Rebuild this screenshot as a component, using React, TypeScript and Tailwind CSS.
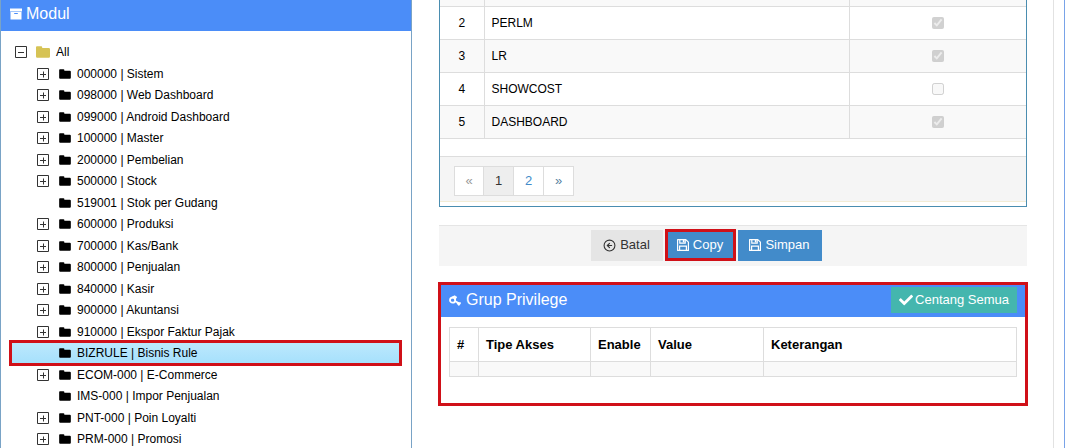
import { CircleArrowLeft } from "lucide-react";
import { FaCheck } from "react-icons/fa";

type Module = { name: string; expandable: boolean; selected?: boolean };

const modules: Module[] = [
  { name: "000000 | Sistem", expandable: true },
  { name: "098000 | Web Dashboard", expandable: true },
  { name: "099000 | Android Dashboard", expandable: true },
  { name: "100000 | Master", expandable: true },
  { name: "200000 | Pembelian", expandable: true },
  { name: "500000 | Stock", expandable: true },
  { name: "519001 | Stok per Gudang", expandable: false },
  { name: "600000 | Produksi", expandable: true },
  { name: "700000 | Kas/Bank", expandable: true },
  { name: "800000 | Penjualan", expandable: true },
  { name: "840000 | Kasir", expandable: true },
  { name: "900000 | Akuntansi", expandable: true },
  { name: "910000 | Ekspor Faktur Pajak", expandable: true },
  { name: "BIZRULE | Bisnis Rule", expandable: false, selected: true },
  { name: "ECOM-000 | E-Commerce", expandable: true },
  { name: "IMS-000 | Impor Penjualan", expandable: false },
  { name: "PNT-000 | Poin Loyalti", expandable: true },
  { name: "PRM-000 | Promosi", expandable: true },
];

const groups = [
  { no: 2, name: "PERLM", checked: true },
  { no: 3, name: "LR", checked: true },
  { no: 4, name: "SHOWCOST", checked: false },
  { no: 5, name: "DASHBOARD", checked: true },
];

function ArchiveIcon() {
  return (
    <svg viewBox="0 0 12 12" className="h-3 w-3 shrink-0" aria-hidden="true">
      <path d="M0 .5h12v3H0z" fill="#fff" />
      <path d="M.5 4h11v7.6H.5zM4.2 5v1h3.6V5z" fill="#fff" fillRule="evenodd" />
    </svg>
  );
}

function FolderIcon({ className }: { className: string }) {
  return (
    <svg viewBox="0 0 14 12" className={className} fill="currentColor" aria-hidden="true">
      <path d="M0 1.2Q0 .2 1 .2h4.2q1 0 1 1v.9h6.6q1.2 0 1.2 1.2v7.3q0 1.2-1.2 1.2H1.2Q0 11.8 0 10.6z" />
    </svg>
  );
}

function KeyIcon() {
  return (
    <svg viewBox="0 0 12 12" className="h-3 w-3 shrink-0" fill="none" stroke="#fff" aria-hidden="true">
      <ellipse cx="3.6" cy="6.2" rx="2.6" ry="2.5" strokeWidth="1.8" />
      <path d="M2.8 3.6 6.4 2M5.6 5.4 7.4 2.6M5.8 7 10 9.2" strokeWidth="1.8" />
      <path d="M7.8 8.2h4v1.6L9.9 12 7.8 9.8z" fill="#fff" stroke="none" />
    </svg>
  );
}

function SaveIcon() {
  return (
    <svg viewBox="0 0 12 12" className="h-3 w-3 shrink-0" fill="none" stroke="#fff" strokeWidth="1.2" aria-hidden="true">
      <path d="M.6.6h8.2l2.6 2.6v8.2H.6z" strokeLinejoin="round" />
      <path d="M2.8.6v3.6h5.4V.6M2.6 11.4V7.2h6.8v4.2" />
      <path d="M5.8 1h1.6v2.4H5.8z" fill="#fff" stroke="none" />
    </svg>
  );
}

function Toggle({ open }: { open?: boolean }) {
  return (
    <button type="button" aria-label={open ? "Collapse" : "Expand"} className="h-3 w-3 shrink-0">
      <svg viewBox="0 0 12 12" className="h-3 w-3" fill="none" stroke="#333" strokeWidth="1">
        <path d="M.5.5h11v11H.5zM3 6.5h6" />
        {!open && <path d="M6.5 3.5v6" />}
      </svg>
    </button>
  );
}

function ModulePanel() {
  return (
    <section className="border-x border-[#79a3c6] bg-white">
      <h2 className="flex h-[31px] items-center gap-1 bg-[#4b8df8] pb-1 pl-[9px] text-base text-white">
        <ArchiveIcon />
        Modul
      </h2>
      <div className="pt-[10px] pr-[11px] pl-[10px] text-xs text-black">
        <div className="flex h-[22px] items-center pl-1">
          <Toggle open />
          <FolderIcon className="ml-[9px] h-3 w-[14px] text-[#d6c355]" />
          <span className="ml-[6px]">All</span>
        </div>
        <ul>
          {modules.map((m) => (
            <li
              key={m.name}
              className={
                m.selected
                  ? "flex h-[22px] items-center bg-linear-to-b from-[#bde9fd] to-[#a5e0fc] pl-[26px] outline-3 -outline-offset-1 outline-[#d01018]"
                  : "flex items-center pl-[26px] odd:h-[21px] even:h-[22px]"
              }
            >
              {m.expandable ? <Toggle /> : <span className="w-3" />}
              <FolderIcon className="ml-[10px] h-[10px] w-3 text-black" />
              <span className="ml-[6px] whitespace-nowrap">{m.name}</span>
            </li>
          ))}
        </ul>
      </div>
    </section>
  );
}

function GroupTable() {
  return (
    <section className="border-x border-b border-[#4a8db0] bg-white pb-1">
      <table className="w-full table-fixed border-collapse text-xs text-black">
        <colgroup>
          <col className="w-[44px]" />
          <col />
          <col className="w-[177px]" />
        </colgroup>
        <tbody>
          <tr className="h-[6px] border-b border-[#ddd] bg-[#f9f9f9]">
            <td className="border-r border-[#ddd]" />
            <td className="border-r border-[#ddd]" />
            <td />
          </tr>
          {groups.map((g) => (
            <tr key={g.no} className="h-[33px] border-b border-[#ddd] even:bg-white odd:bg-[#f9f9f9]">
              <td className="border-r border-[#ddd] text-center">{g.no}</td>
              <td className="border-r border-[#ddd] px-[7px]">{g.name}</td>
              <td className="text-center">
                <input
                  type="checkbox"
                  disabled
                  defaultChecked={g.checked}
                  aria-label={g.name}
                  className="mx-auto block h-3 w-3"
                />
              </td>
            </tr>
          ))}
        </tbody>
      </table>
      <div className="mt-[17px] border-t border-b border-t-[#ddd] border-b-[#f3ecd6] bg-[#f5f5f5] px-[14px] pt-[9px] pb-[5px]">
        <nav aria-label="Pagination" className="flex text-[13px]">
          <a href="#prev" className="flex h-[30px] w-[30px] items-center justify-center border border-[#ddd] bg-white text-[#999]">«</a>
          <a href="#1" className="-ml-px flex h-[30px] w-[31px] items-center justify-center border border-[#ddd] bg-[#eee] text-[#333]">1</a>
          <a href="#2" className="-ml-px flex h-[30px] w-[31px] items-center justify-center border border-[#ddd] bg-white text-[#428bca]">2</a>
          <a href="#next" className="-ml-px flex h-[30px] w-[31px] items-center justify-center border border-[#ddd] bg-white text-[#5580a0]">»</a>
        </nav>
      </div>
    </section>
  );
}

function Actions() {
  return (
    <div className="mt-[18px] flex h-[41px] items-center justify-center gap-[2px] border-t border-[#e5e5e5] bg-[#f5f5f5] pr-[54px] pb-px text-[13px]">
      <button type="button" className="flex h-[31px] w-[72px] items-center justify-center gap-1 bg-[#e5e5e5] text-[#333]">
        <CircleArrowLeft className="h-[13px] w-[13px]" />
        Batal
      </button>
      <button type="button" className="flex h-8 w-[71px] items-center justify-center gap-1 border-3 border-[#d01018] bg-[#428bca] text-white">
        <SaveIcon />
        Copy
      </button>
      <button type="button" className="flex h-[31px] w-[84px] items-center justify-center gap-1 bg-[#428bca] text-white">
        <SaveIcon />
        Simpan
      </button>
    </div>
  );
}

function PrivilegePanel() {
  return (
    <section className="-mx-px mt-4 border-3 border-[#d01018] bg-white pb-[26px]">
      <header className="flex h-8 items-center justify-between bg-[#4b8df8] pr-2 pl-2 text-white">
        <h2 className="flex items-center gap-[5px] pb-[2px] text-base">
          <KeyIcon />
          Grup Privilege
        </h2>
        <button type="button" className="mb-[2px] flex h-[26px] items-center gap-[2px] bg-[#44b6ae] px-2 text-[13px]">
          <FaCheck className="h-[14px] w-[14px]" />
          Centang Semua
        </button>
      </header>
      <div className="px-2 pt-[10px]">
        <table className="w-full table-fixed border-collapse text-left text-[13px] text-black">
          <colgroup>
            <col className="w-[29px]" />
            <col className="w-[112px]" />
            <col className="w-[60px]" />
            <col className="w-[113px]" />
            <col />
          </colgroup>
          <thead>
            <tr className="h-[34px]">
              {["#", "Tipe Akses", "Enable", "Value", "Keterangan"].map((h) => (
                <th key={h} className="border border-[#ddd] px-[7px] pt-[2px] font-bold">{h}</th>
              ))}
            </tr>
          </thead>
          <tbody>
            <tr className="h-[15px] bg-[#f9f9f9]">
              <td className="border border-[#ddd]" />
              <td className="border border-[#ddd]" />
              <td className="border border-[#ddd]" />
              <td className="border border-[#ddd]" />
              <td className="border border-[#ddd]" />
            </tr>
          </tbody>
        </table>
      </div>
    </section>
  );
}

export default function App() {
  return (
    <main className="flex h-screen overflow-hidden border-r border-[#79a3e8] bg-white pr-[10px] font-['Liberation_Sans',Arial,sans-serif]">
      <div className="grid min-w-0 flex-1 grid-cols-[412fr_641fr] border-r border-[#e2e2e2]">
        <ModulePanel />
        <div className="min-w-0 pr-[26px] pl-[27px]">
          <GroupTable />
          <Actions />
          <PrivilegePanel />
        </div>
      </div>
    </main>
  );
}
